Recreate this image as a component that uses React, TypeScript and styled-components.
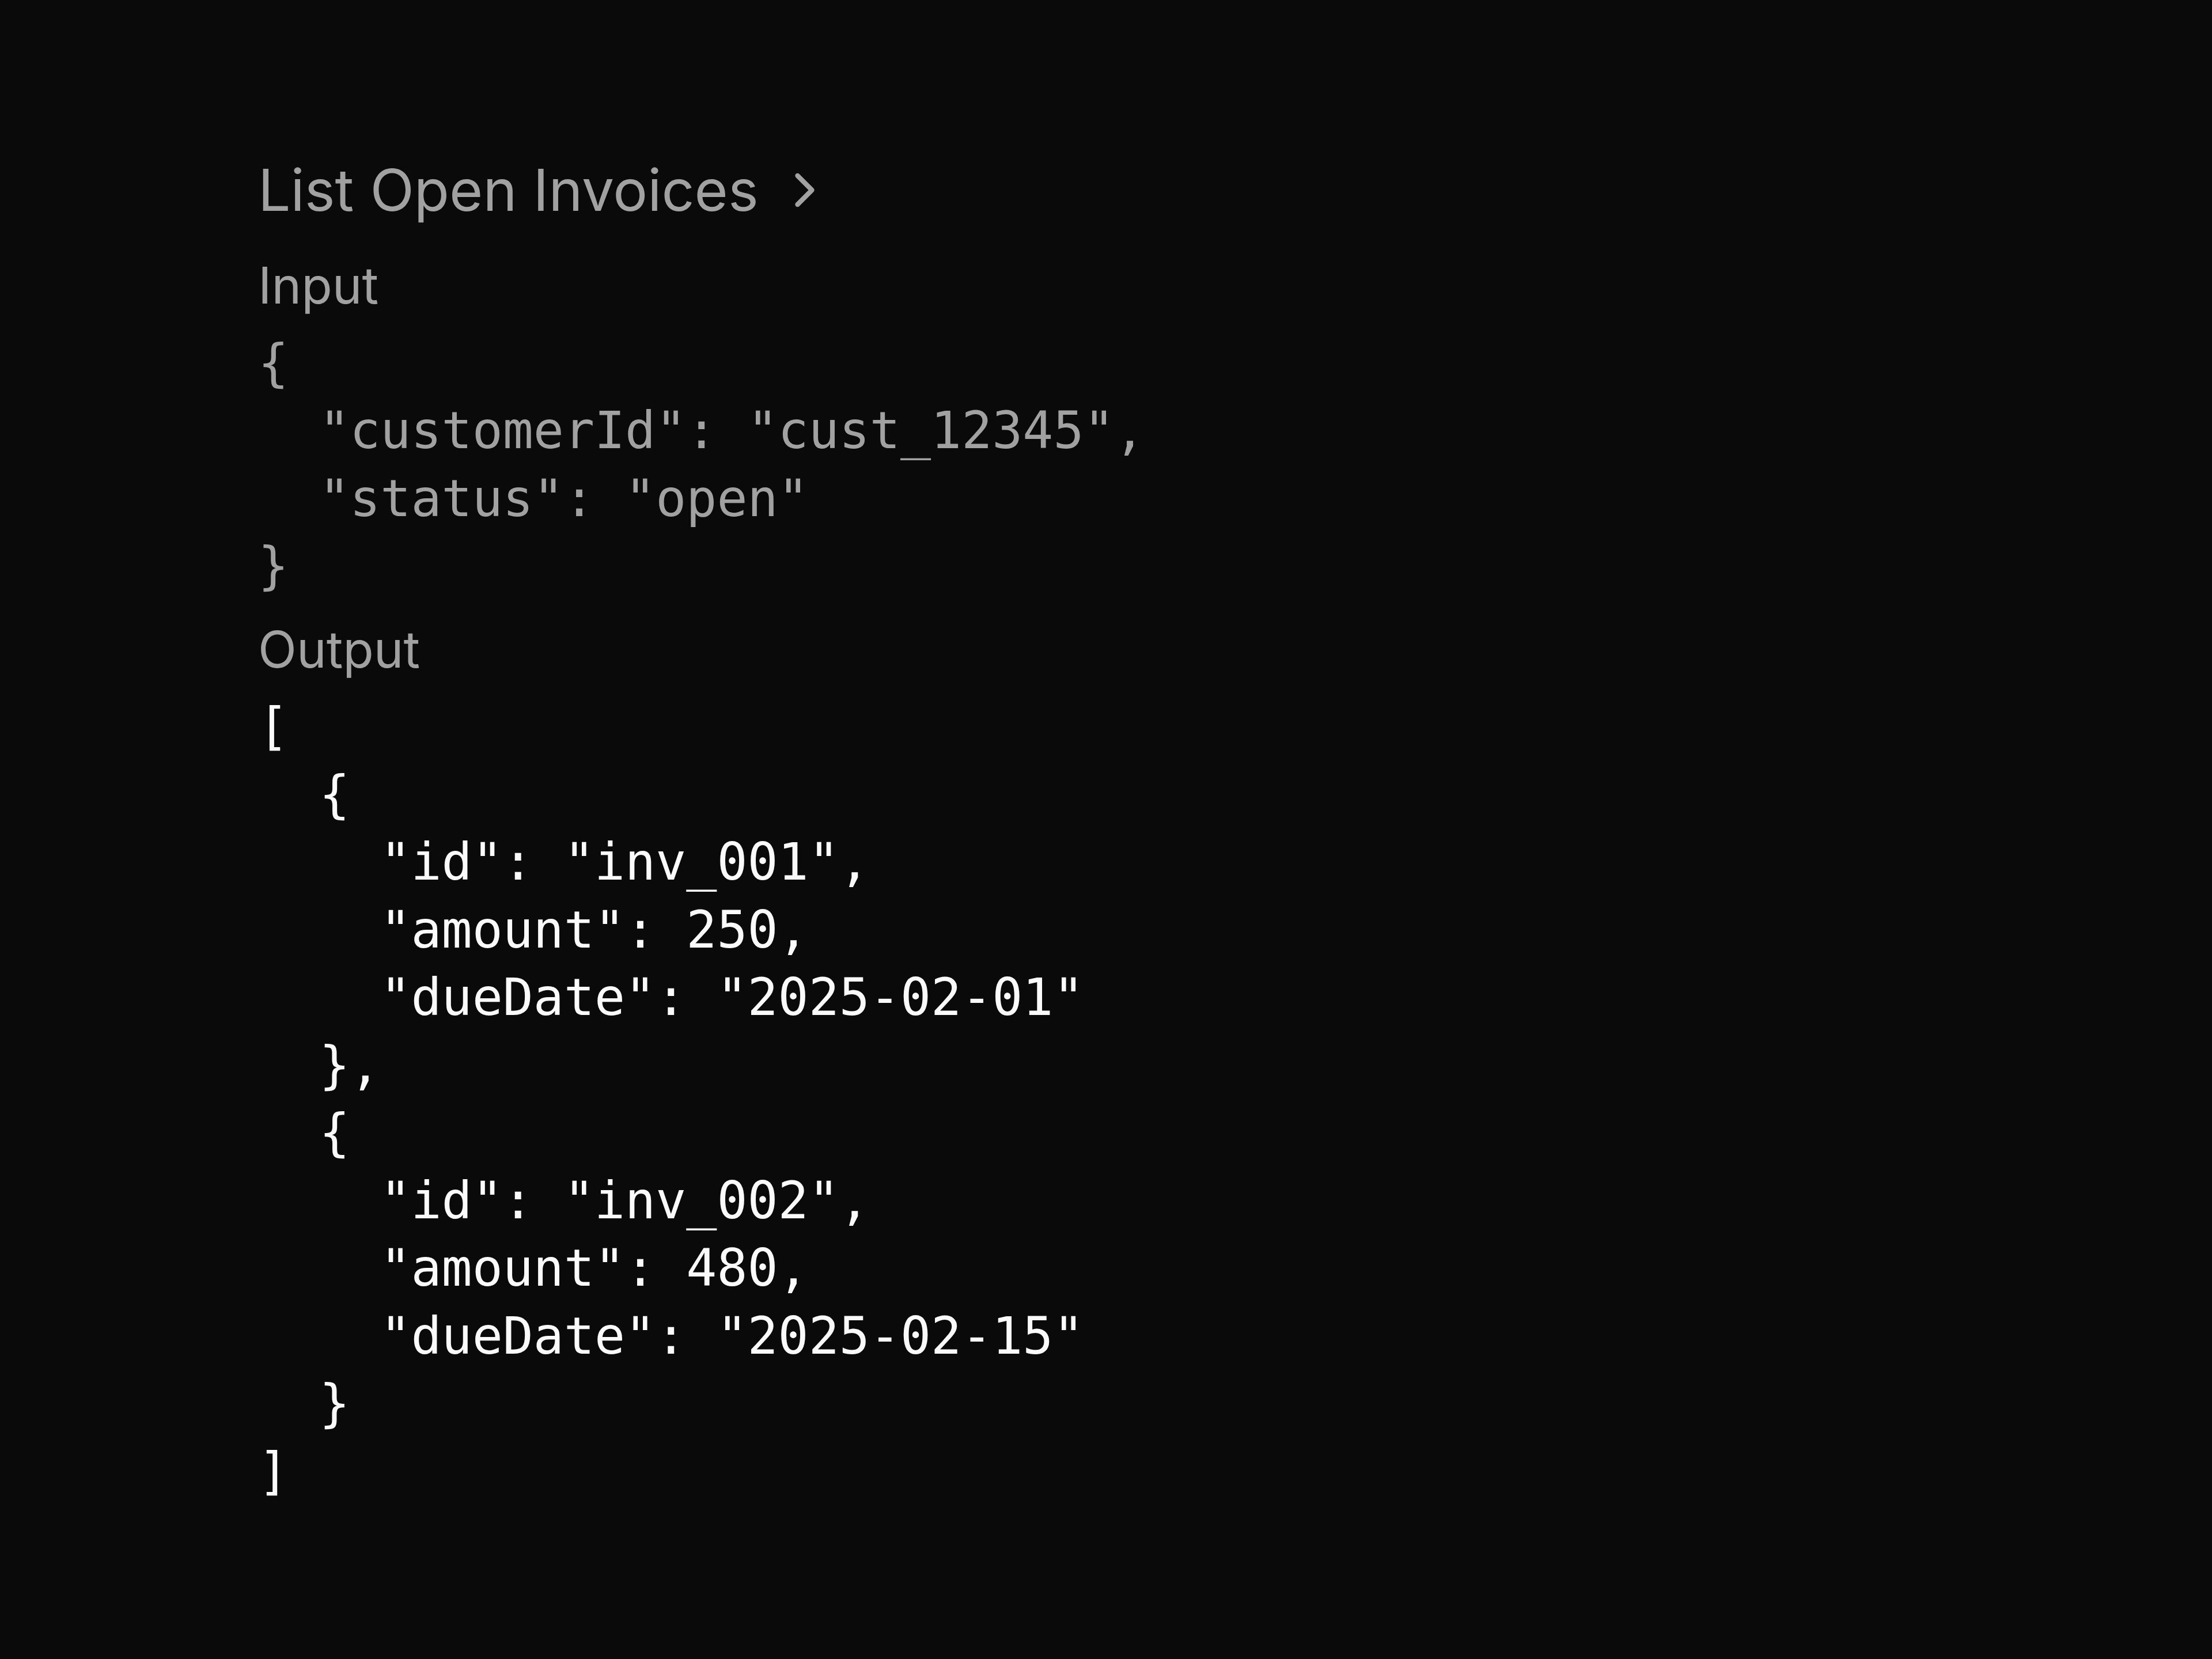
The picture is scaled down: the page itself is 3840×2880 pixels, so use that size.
import React from "react";
import styled, { createGlobalStyle } from "styled-components";
import { ChevronRight } from "lucide-react";

const Global = createGlobalStyle`
  html, body {
    margin: 0;
    padding: 0;
    background: #0a0a0a;
  }
  body {
    min-height: 2880px;
    font-family: Inter, "Noto Sans", sans-serif;
  }
`;

const Page = styled.main`
  box-sizing: border-box;
  width: 3840px;
  min-height: 2880px;
  padding: 270px 0 0 448px;
  display: flex;
  flex-direction: column;
  background: #0a0a0a;
`;

const TitleRow = styled.div`
  display: flex;
  align-items: center;
  gap: 30px;
  height: 120px;
  margin-bottom: 47px;
  color: #a1a1a1;
`;

const Title = styled.h1`
  margin: 0;
  font-family: Inter, "Noto Sans", sans-serif;
  font-size: 100px;
  line-height: 120px;
  font-weight: 400;
  letter-spacing: 0;
  color: #a1a1a1;
`;

const Sections = styled.div`
  display: flex;
  flex-direction: column;
  gap: 27px;
`;

const Section = styled.section`
  display: flex;
  flex-direction: column;
  gap: 17px;
`;

const Label = styled.div`
  font-family: Inter, "Noto Sans", sans-serif;
  font-size: 87.5px;
  line-height: 117.5px;
  font-weight: 400;
  color: #a1a1a1;
`;

const Code = styled.pre<{ $bright?: boolean }>`
  margin: 0;
  font-family: "DejaVu Sans Mono", "Liberation Mono", monospace;
  font-size: 88.2px;
  line-height: 117.5px;
  color: ${(p) => (p.$bright ? "#fafafa" : "#a1a1a1")};
  white-space: pre;
`;

const input = `{
  "customerId": "cust_12345",
  "status": "open"
}`;

const output = `[
  {
    "id": "inv_001",
    "amount": 250,
    "dueDate": "2025-02-01"
  },
  {
    "id": "inv_002",
    "amount": 480,
    "dueDate": "2025-02-15"
  }
]`;

export default function App() {
  return (
    <>
      <Global />
      <Page>
        <TitleRow>
          <Title>List Open Invoices</Title>
          <ChevronRight size={100} strokeWidth={2} color="#a1a1a1" />
        </TitleRow>
        <Sections>
          <Section>
            <Label>Input</Label>
            <Code>{input}</Code>
          </Section>
          <Section>
            <Label>Output</Label>
            <Code $bright>{output}</Code>
          </Section>
        </Sections>
      </Page>
    </>
  );
}
